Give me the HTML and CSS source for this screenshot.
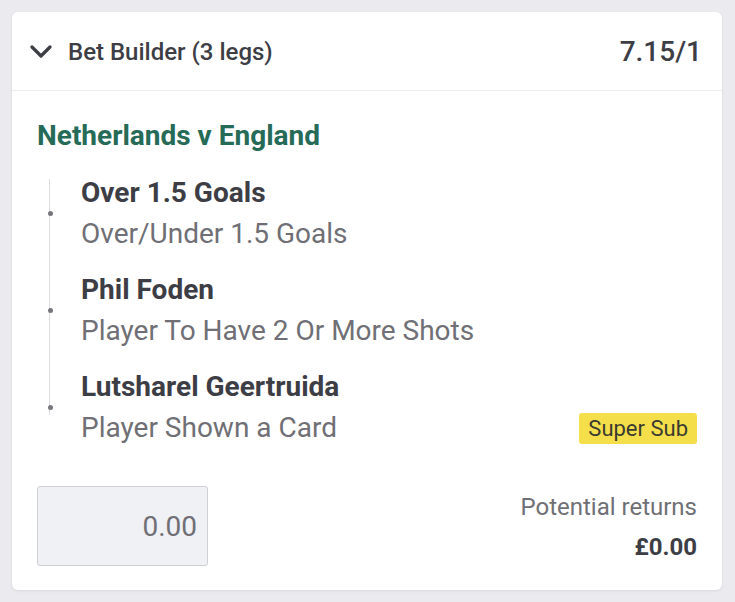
FILE: index.html
```html
<!DOCTYPE html>
<html lang="en">
<head>
<meta charset="utf-8">
<title>Bet Builder</title>
<link rel="stylesheet" href="styles.css">
</head>
<body>
<div class="card">
  <div class="card-header">
    <div class="header-left">
      <svg class="chevron" width="22" height="14" viewBox="0 0 22 14"><path d="M2 2 L11 11 L20 2" fill="none" stroke="#3d3d45" stroke-width="3.2" stroke-linecap="round" stroke-linejoin="round"/></svg>
      <span class="title">Bet Builder (3 legs)</span>
    </div>
    <span class="odds">7.15/1</span>
  </div>
  <div class="card-body">
    <div class="match">Netherlands v England</div>
    <div class="legs">
      <div class="leg">
        <div class="leg-title">Over 1.5 Goals</div>
        <div class="leg-sub">Over/Under 1.5 Goals</div>
      </div>
      <div class="leg">
        <div class="leg-title">Phil Foden</div>
        <div class="leg-sub">Player To Have 2 Or More Shots</div>
      </div>
      <div class="leg">
        <div class="leg-title">Lutsharel Geertruida</div>
        <div class="leg-sub row"><span>Player Shown a Card</span><span class="badge">Super Sub</span></div>
      </div>
    </div>
    <div class="footer">
      <div class="stake">0.00</div>
      <div class="returns">
        <div class="returns-label">Potential returns</div>
        <div class="returns-value">£0.00</div>
      </div>
    </div>
  </div>
</div>
</body>
</html>
```
FILE: styles.css
```css
* { box-sizing: border-box; }
html, body { margin: 0; padding: 0; }
body {
  background: #ebebef;
  font-family: Roboto, "Liberation Sans", sans-serif;
  color: #3d3d45;
  padding: 12px 13px 13px 12px;
}
.card {
  background: #fff;
  border-radius: 6px;
  box-shadow: 0 1px 3px rgba(0,0,0,0.08);
}
.card-header {
  height: 79px;
  border-bottom: 1px solid #ececef;
  display: flex;
  align-items: center;
  justify-content: space-between;
  padding: 0 20px 0 18px;
}
.header-left { display: flex; align-items: center; gap: 16px; }
.chevron { display: block; margin-top: 1px; }
.title {
  font-size: 24px;
  font-weight: 500;
  margin-top: 2px;
}
.odds {
  font-size: 28px;
  font-weight: 500;
}
.card-body {
  padding: 25px 25px 24px 25px;
}
.match {
  color: #266b57;
  font-weight: 700;
  font-size: 28px;
  line-height: 40px;
}
.legs {
  margin-top: 17px;
  position: relative;
  display: flex;
  flex-direction: column;
  gap: 15px;
  padding-left: 44px;
}
.legs::before {
  content: "";
  position: absolute;
  left: 12px;
  top: 6px;
  bottom: 34px;
  width: 1px;
  background: #dcdcdf;
}
.leg { position: relative; }
.leg::before {
  content: "";
  position: absolute;
  left: -33px;
  top: 38px;
  width: 5px;
  height: 5px;
  border-radius: 50%;
  background: #76767c;
}
.leg-title {
  font-size: 28px;
  font-weight: 700;
  line-height: 40px;
}
.leg-sub {
  font-size: 28px;
  color: #6f6f75;
  line-height: 42px;
}
.row { display: flex; justify-content: space-between; align-items: center; }
.badge {
  background: #f4df4b;
  color: #3a3a30;
  font-size: 22px;
  line-height: 31px;
  padding: 0 9px;
  border-radius: 3px;
}
.footer {
  margin-top: 37px;
  display: flex;
  justify-content: space-between;
  align-items: center;
}
.stake {
  width: 171px;
  height: 80px;
  background: #eff1f5;
  border: 1px solid #cfd0d4;
  border-radius: 3px;
  display: flex;
  align-items: center;
  justify-content: flex-end;
  padding-right: 10px;
  font-size: 28px;
  color: #6f6f75;
}
.returns { text-align: right; }
.returns-label {
  font-size: 24px;
  color: #6f6f75;
  line-height: 42px;
}
.returns-value {
  font-size: 24px;
  font-weight: 700;
  line-height: 38px;
}
```
